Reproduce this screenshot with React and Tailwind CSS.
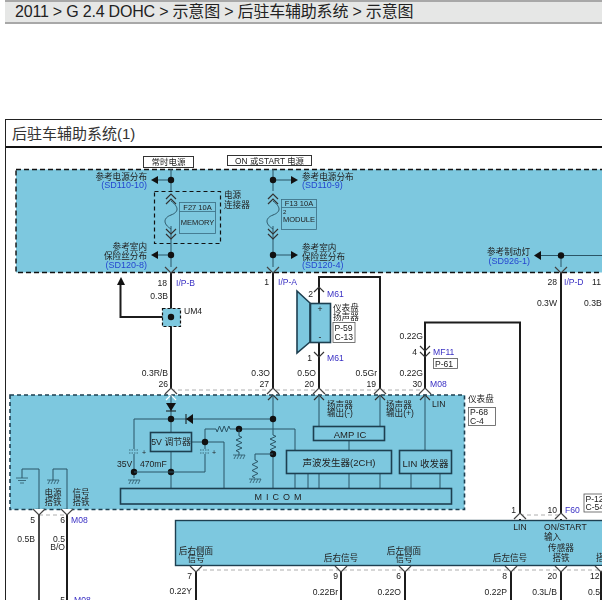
import React from 'react';

const WIRE = '#2b5566';
const INK = '#1c1c1c';
const PANEL = '#7dc8df';
const LINK = '#2547d0';
const CODE = '#3a30c4';

function Txt({ x, y, a = 'start', s = 8.6, c = '#222', w, ls, children }) {
  return (
    <text x={x} y={y} textAnchor={a} fontSize={s} fill={c} fontWeight={w} letterSpacing={ls} dominantBaseline="central">
      {children}
    </text>
  );
}

function Ref({ x, y, a, children }) {
  return <Txt x={x} y={y} a={a} s={9} c={LINK}>{children}</Txt>;
}

function Line({ d, c = WIRE, w = 1, dash }) {
  return <path d={d} fill="none" stroke={c} strokeWidth={w} strokeDasharray={dash} />;
}

function Dot({ x, y, r = 3.2 }) {
  return <circle cx={x} cy={y} r={r} fill="#111" />;
}

// connector mark, dir 1 opens upward (v), -1 opens downward (^)
function Mark({ x, y, dir = 1, c = '#444', fill = '#fff' }) {
  return (
    <path
      d={`M${x - 6} ${y - 5 * dir} L${x} ${y + 1 * dir} L${x + 6} ${y - 5 * dir}`}
      fill={fill}
      stroke={c}
      strokeWidth="1.2"
    />
  );
}

function Chevron({ x, y, dir = 1, c = '#333' }) {
  return <path d={`M${x - 5} ${y - 4 * dir} L${x} ${y + 1 * dir} L${x + 5} ${y - 4 * dir}`} fill="none" stroke={c} strokeWidth="1.2" />;
}

function Hatch({ x, y }) {
  return (
    <g stroke={WIRE} strokeWidth="0.8" fill="none">
      <path d={`M${x - 6} ${y} H${x + 6}`} />
      <path d={`M${x - 5} ${y + 4} L${x - 3} ${y} M${x - 2} ${y + 4} L${x} ${y} M${x + 1} ${y + 4} L${x + 3} ${y} M${x + 4} ${y + 4} L${x + 6} ${y}`} />
    </g>
  );
}

function ResV({ x, y, h = 16 }) {
  const n = 6;
  const st = h / n;
  let d = `M${x} ${y}`;
  for (let i = 0; i < n; i++) d += ` L${x + (i % 2 ? -3 : 3)} ${y + st * i + st / 2}`;
  d += ` L${x} ${y + h}`;
  return <path d={d} fill="none" stroke={WIRE} strokeWidth="1" />;
}

function ResH({ x, y, w = 14 }) {
  const n = 6;
  const st = w / n;
  let d = `M${x} ${y}`;
  for (let i = 0; i < n; i++) d += ` L${x + st * i + st / 2} ${y + (i % 2 ? -3 : 3)}`;
  d += ` L${x + w} ${y}`;
  return <path d={d} fill="none" stroke={WIRE} strokeWidth="1" />;
}

function Cap({ x, y }) {
  return (
    <g stroke={WIRE} strokeWidth="0.8" fill="none">
      <path d={`M${x - 5} ${y - 2} H${x + 5}`} strokeDasharray="1.5 1" />
      <path d={`M${x - 5} ${y + 1} H${x + 5}`} strokeDasharray="1.5 1" />
    </g>
  );
}

function Fuse({ x, y }) {
  return (
    <g>
      <Chevron x={x} y={y} dir={-1} />
      <Chevron x={x} y={y + 5} dir={-1} />
      <path
        d={`M${x} ${y + 6} C${x + 8} ${y + 12} ${x + 8} ${y + 17} ${x} ${y + 20} C${x - 8} ${y + 23} ${x - 8} ${y + 29} ${x} ${y + 34}`}
        fill="none"
        stroke={WIRE}
        strokeWidth="1"
      />
      <Chevron x={x} y={y + 38} />
      <Chevron x={x} y={y + 43} />
    </g>
  );
}

function Box({ x, y, w, h, sw = 1.6, c = '#1d3f50', fill = 'none' }) {
  return <rect x={x} y={y} width={w} height={h} fill={fill} stroke={c} strokeWidth={sw} />;
}

function Note({ x, y, w, h, a, b }) {
  return (
    <g>
      <rect x={x} y={y} width={w} height={h} fill="#fff" stroke="#555" strokeWidth="0.8" />
      <Txt x={x + 1.5} y={y + (b ? h * 0.27 : h / 2)}>{a}</Txt>
      {b && <Txt x={x + 1.5} y={y + h * 0.74}>{b}</Txt>}
    </g>
  );
}

function Diagram() {
  return (
    <svg viewBox="6 148 596 452" width="596" height="452" className="block blur-[0.35px]">
      {/* power panel */}
      <rect x="16" y="169.5" width="600" height="103" fill={PANEL} stroke="#111" strokeWidth="1.4" strokeDasharray="5 3" />
      <rect x="143.5" y="156.5" width="50" height="11" fill="#fff" stroke="#333" strokeWidth="1" />
      <Txt x={168.5} y={162} a="middle" s={8.5}>常时电源</Txt>
      <rect x="227.5" y="155.5" width="84" height="10" fill="#fff" stroke="#333" strokeWidth="1" />
      <Txt x={269.5} y={160.5} a="middle" s={8.4}>ON 或START 电源</Txt>

      <Line d="M171 169 V191 M171 226 V272" />
      <Line d="M273 169 V191 M273 226 V272" />
      <Line d="M171 180 H158 M171 255 H158" />
      <Line d="M273 180 H292 M273 255 H292" />
      <Dot x={171} y={180} />
      <Dot x={273} y={180} />
      <Dot x={171} y={255} />
      <Dot x={273} y={255} />
      <path d="M151 180 L158 176 V184 Z M151 255 L158 251 V259 Z" fill="#111" />
      <path d="M298 180 L291 176 V184 Z M298 255 L291 251 V259 Z" fill="#111" />

      <Txt x={147} y={177} a="end">参考电源分布</Txt>
      <Ref x={147} y={185} a="end">(SD110-10)</Ref>
      <Txt x={147} y={247} a="end">参考室内</Txt>
      <Txt x={147} y={256} a="end">保险丝分布</Txt>
      <Ref x={147} y={265} a="end">(SD120-8)</Ref>
      <Txt x={302} y={177}>参考电源分布</Txt>
      <Ref x={302} y={185}>(SD110-9)</Ref>
      <Txt x={302} y={248}>参考室内</Txt>
      <Txt x={302} y={257}>保险丝分布</Txt>
      <Ref x={302} y={265}>(SD120-4)</Ref>

      <rect x="154.5" y="191.5" width="66" height="52" fill="none" stroke="#111" strokeWidth="1.2" strokeDasharray="4 3" />
      <Txt x={224} y={195}>电源</Txt>
      <Txt x={224} y={205}>连接器</Txt>
      <Fuse x={171} y={195} />
      <Fuse x={273} y={195} />
      <Box x={179.5} y={202.5} w={36} h={31} sw={0.8} c="#3a6c80" />
      <Line d="M179.5 211.5 H215.5" c="#3a6c80" w={0.8} />
      <Txt x={197.5} y={207} a="middle" s={7.5}>F27 10A</Txt>
      <Txt x={197.5} y={222} a="middle" s={7.5}>MEMORY</Txt>
      <Box x={281.5} y={199.5} w={35} h={30} sw={0.8} c="#3a6c80" />
      <Line d="M281.5 207.5 H316.5" c="#3a6c80" w={0.8} />
      <Txt x={299} y={203} a="middle" s={7.5}>F13 10A</Txt>
      <Txt x={283} y={212} s={6}>2</Txt>
      <Txt x={299} y={219} a="middle" s={7.5}>MODULE</Txt>

      <Txt x={530} y={252} a="end">参考制动灯</Txt>
      <Ref x={530} y={261} a="end">(SD926-1)</Ref>
      <path d="M534 255.5 L541 251 V260 Z" fill="#111" />
      <Line d="M541 255.5 H602 M561 255 V272" />
      <Dot x={561} y={255.5} />

      {/* wires between panels */}
      <Line d="M171 272 V393" c={INK} w={2} />
      <Line d="M273 272 V393" c={INK} w={2} />
      <Line d="M561 272 V520" c={INK} w={2} />
      <Line d="M319 393 V342 M319 303 V277 H380 V393" c={INK} w={2} />
      <Line d="M425 393 V322.5 H520 V520" c={INK} w={2} />
      <Line d="M171 317 H120.5 V284" c={INK} w={2} />
      <path d="M121 277 L125 285 H117 Z" fill="#111" />
      <Mark x={171} y={272} fill={PANEL} />
      <Mark x={273} y={272} fill={PANEL} />
      <Mark x={561} y={272} fill={PANEL} />

      <Txt x={167} y={283} a="end">18</Txt>
      <Txt x={176} y={283} c={CODE}>I/P-B</Txt>
      <Txt x={269} y={282} a="end">1</Txt>
      <Txt x={278} y={282} c={CODE}>I/P-A</Txt>
      <Txt x={557} y={282} a="end">28</Txt>
      <Txt x={564} y={282} c={CODE}>I/P-D</Txt>
      <Txt x={592} y={282}>11</Txt>
      <Txt x={557} y={303} a="end">0.3W</Txt>
      <Txt x={584} y={303}>0.3B</Txt>
      <Txt x={168} y={296} a="end">0.3B</Txt>

      <rect x="162.5" y="308.5" width="18" height="18" fill={PANEL} stroke="#111" strokeWidth="1.2" strokeDasharray="3 2" />
      <Dot x={171} y={317} />
      <Txt x={184} y={311}>UM4</Txt>

      <Txt x={168} y={373} a="end">0.3R/B</Txt>
      <Txt x={168} y={384} a="end">26</Txt>
      <Txt x={270} y={373} a="end">0.3O</Txt>
      <Txt x={269} y={384} a="end">27</Txt>
      <Txt x={316} y={373} a="end">0.5O</Txt>
      <Txt x={314} y={384} a="end">20</Txt>
      <Txt x={377} y={373} a="end">0.5Gr</Txt>
      <Txt x={376} y={384} a="end">19</Txt>
      <Txt x={423} y={336} a="end">0.22G</Txt>
      <Txt x={423} y={373} a="end">0.22G</Txt>
      <Txt x={422} y={384} a="end">30</Txt>
      <Txt x={430} y={384} c={CODE}>M08</Txt>
      <Txt x={417} y={352} a="end">4</Txt>
      <Chevron x={425} y={350} />
      <Chevron x={425} y={356} />
      <Txt x={433} y={352} c={CODE}>MF11</Txt>
      <Note x={433.5} y={358.5} w={24} h={10} a="P-61" />

      {/* speaker */}
      <path d="M297 291 L310 303 V342 L297 353 Z" fill={PANEL} stroke="#1d3f50" strokeWidth="1.6" />
      <rect x="310.5" y="303.5" width="20" height="39" fill={PANEL} stroke="#1d3f50" strokeWidth="1.6" />
      <Txt x={320} y={309} a="middle">+</Txt>
      <Txt x={320} y={337} a="middle">-</Txt>
      <Chevron x={319} y={288} dir={-1} />
      <Chevron x={319} y={356} />
      <Txt x={313} y={294} a="end">2</Txt>
      <Txt x={327} y={294} c={CODE}>M61</Txt>
      <Txt x={312} y={358} a="end">1</Txt>
      <Txt x={327} y={358} c={CODE}>M61</Txt>
      <Txt x={333} y={308}>仪表盘</Txt>
      <Txt x={333} y={317}>扬声器</Txt>
      <Note x={333} y={322.5} w={22} h={20} a="P-59" b="C-13" />

      {/* cluster panel */}
      <Line d="M171 390 H425" c="#999" w={0.8} dash="4 3" />
      <rect x="10" y="395" width="454.5" height="114.5" fill={PANEL} stroke="#1d3f50" strokeWidth="1.6" strokeDasharray="4 3" />
      {[171, 273, 319, 380, 425].map((x) => (
        <Mark key={x} x={x} y={389} dir={-1} fill="#fff" />
      ))}
      {[273, 319, 380, 425].map((x) => (
        <Chevron key={x} x={x} y={396} dir={-1} />
      ))}
      <Chevron x={171} y={396} dir={-1} c="#fff" />
      <Txt x={468} y={399}>仪表盘</Txt>
      <Note x={468.5} y={407.5} w={27} h={18} a="P-68" b="C-4" />

      <Line d="M171 395 V432 M171 452 V488" />
      <path d="M166 403 H176 L171 411 Z" fill="#111" />
      <path d="M166 411 H176" stroke="#111" />
      <Line d="M134 419 H273 M273 395 V435 M273 451 V488" />
      <path d="M186 419 L193 414 V424 Z" fill="#111" />
      <path d="M186 414 V424" stroke="#111" />
      <Dot x={171} y={419} />
      <Dot x={273} y={419} />

      <Line d="M134 419 V449 M134 454 V478" />
      <Cap x={134} y={452} />
      <Txt x={142} y={452} s={7}>+</Txt>
      <Dot x={134} y={472} />
      <Dot x={171} y={472} />
      <Hatch x={134} y={480} />
      <Txt x={117} y={464}>35V</Txt>
      <Txt x={140} y={464}>470mF</Txt>
      <Line d="M134 472 H205 V454 M205 449 V429 H216 M230 429 H295 V488 M192 442 H224 V488" />
      <Cap x={205} y={452} />
      <Txt x={212} y={452} s={7}>+</Txt>
      <Dot x={205} y={442} />
      <ResH x={216} y={429} />
      <Dot x={239} y={429} />
      <Line d="M239 429 V436 M239 452 V455" />
      <ResV x={239} y={436} />
      <Hatch x={239} y={455} />
      <ResV x={273} y={435} />
      <Dot x={273} y={454} />
      <Line d="M273 454 H255 V460" />
      <ResV x={255} y={460} h={18} />
      <Hatch x={255} y={479} />

      <Box x={150.5} y={432.5} w={41} h={19} fill={PANEL} />
      <Txt x={171} y={442} a="middle" s={8.8}>5V 调节器</Txt>

      <Txt x={327} y={405}>扬声器</Txt>
      <Txt x={327} y={413}>输出(-)</Txt>
      <Txt x={386} y={405}>扬声器</Txt>
      <Txt x={386} y={413}>输出(+)</Txt>
      <Txt x={432} y={404}>LIN</Txt>

      <Line d="M319 395 V426 M380 395 V426 M349 441 V450 M425 395 V450 M308 473 V488 M319 473 V488 M349 473 V488 M380 473 V488 M411 473 V488 M440 473 V488" />
      <Box x={313.5} y={426.5} w={71} h={14} fill={PANEL} />
      <Txt x={350} y={434} a="middle" s={9.5}>AMP IC</Txt>
      <Box x={286.5} y={450.5} w={105} h={23} fill={PANEL} />
      <Txt x={339} y={462.5} a="middle" s={9.5}>声波发生器(2CH)</Txt>
      <Box x={399.5} y={450.5} w={52} h={23} fill={PANEL} />
      <Txt x={425.5} y={463} a="middle" s={9.5}>LIN 收发器</Txt>
      <Box x={120.5} y={488.5} w={331} h={15.5} fill={PANEL} />
      <Txt x={280} y={496.5} a="middle" s={9} ls={4}>MICOM</Txt>

      {/* grounds */}
      <Line d="M22 478 V469 H39 V510 M53 480 V469 H67 V510" />
      <path d="M16 478 H28 M18 480.5 H26 M20 483 H24" stroke={WIRE} strokeWidth="0.8" />
      <Hatch x={53} y={480} />
      <Txt x={53} y={493} a="middle">电源</Txt>
      <Txt x={53} y={502} a="middle">搭铁</Txt>
      <Txt x={81} y={493} a="middle">信号</Txt>
      <Txt x={81} y={502} a="middle">搭铁</Txt>

      <Line d="M39 515 H67" c="#999" w={0.8} dash="4 3" />
      <Line d="M39 512 V600" c="#4a4a4a" w={2} />
      <Line d="M67 512 V600" c={INK} w={2} />
      <Mark x={39} y={514} fill="#fff" />
      <Mark x={67} y={514} fill="#fff" />
      <Txt x={35} y={520} a="end">5</Txt>
      <Txt x={65} y={520} a="end">6</Txt>
      <Txt x={71} y={520} c={CODE}>M08</Txt>
      <Txt x={35} y={539} a="end">0.5B</Txt>
      <Txt x={65} y={539} a="end">0.5</Txt>
      <Txt x={65} y={547} a="end">B/O</Txt>
      <Txt x={65} y={600} a="end">5</Txt>
      <Txt x={74} y={600} c={CODE}>M08</Txt>

      {/* bottom module */}
      <Line d="M520 515 H561" c="#999" w={0.8} dash="4 3" />
      <Txt x={516} y={510} a="end">1</Txt>
      <Txt x={557} y={510} a="end">10</Txt>
      <Txt x={565} y={510} c={CODE}>F60</Txt>
      <Note x={584} y={494} w={30} h={18} a="P-12" b="C-54" />
      <rect x="175.5" y="520.5" width="440" height="45" fill={PANEL} stroke="#1d3f50" strokeWidth="1.4" />
      <Mark x={520} y={514} dir={-1} fill="#fff" />
      <Mark x={561} y={514} dir={-1} fill="#fff" />
      <Txt x={520} y={527} a="middle">LIN</Txt>
      <Txt x={544} y={527}>ON/START</Txt>
      <Txt x={544} y={537}>输入</Txt>
      <Txt x={561} y={548} a="middle">传感器</Txt>
      <Txt x={561} y={558} a="middle">搭铁</Txt>
      <Txt x={596} y={558}>搭</Txt>
      <Txt x={196} y={551} a="middle">后右侧面</Txt>
      <Txt x={196} y={559} a="middle">信号</Txt>
      <Txt x={341} y={558} a="middle">后右信号</Txt>
      <Txt x={404} y={551} a="middle">后左侧面</Txt>
      <Txt x={404} y={559} a="middle">信号</Txt>
      <Txt x={510} y={558} a="middle">后左信号</Txt>

      <Line d="M196 570 H602" c="#999" w={0.8} dash="4 3" />
      {[196, 341, 405, 511, 561, 601].map((x) => (
        <g key={x}>
          <Line d={`M${x} 566 V600`} c={INK} w={2} />
          <Mark x={x} y={571} fill="#fff" />
        </g>
      ))}
      <Txt x={192} y={576} a="end">7</Txt>
      <Txt x={192} y={591} a="end">0.22Y</Txt>
      <Txt x={338} y={576} a="end">9</Txt>
      <Txt x={338} y={592} a="end">0.22Br</Txt>
      <Txt x={401} y={576} a="end">6</Txt>
      <Txt x={401} y={592} a="end">0.22O</Txt>
      <Txt x={507} y={576} a="end">8</Txt>
      <Txt x={507} y={592} a="end">0.22P</Txt>
      <Txt x={557} y={576} a="end">20</Txt>
      <Txt x={557} y={592} a="end">0.3L/B</Txt>
      <Txt x={590} y={576}>12</Txt>
      <Txt x={588} y={592}>0.5B</Txt>
    </svg>
  );
}

export default function App() {
  return (
    <div className="h-[600px] w-[602px] overflow-hidden bg-white font-['Liberation_Sans','Noto_Sans_CJK_SC',sans-serif] text-[#222]">
      <div className="ml-[5px] flex h-[24px] items-center border-y-2 border-[#a8a8a8] bg-[#e6e7e6] pl-[10px] text-[16px] tracking-[-0.2px]">
        2011 &gt; G 2.4 DOHC &gt; 示意图 &gt; 后驻车辅助系统 &gt; 示意图
      </div>
      <div className="ml-[5px] mt-[95px] border-l border-t border-[#222]">
        <div className="flex h-[28px] items-center border-b-2 border-[#111] pl-[6px] text-[15px] leading-none text-[#333]">
          后驻车辅助系统(1)
        </div>
        <Diagram />
      </div>
    </div>
  );
}
